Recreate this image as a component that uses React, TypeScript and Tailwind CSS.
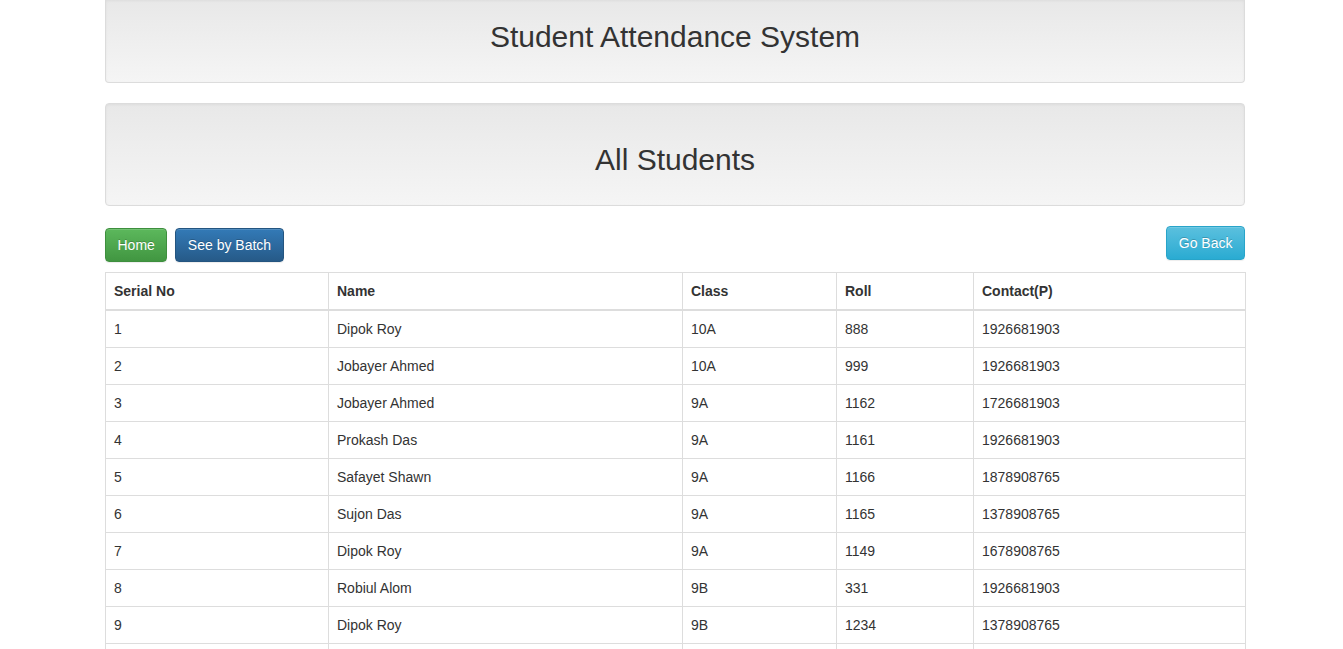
import React from "react";

const rows = [
  ["1", "Dipok Roy", "10A", "888", "1926681903"],
  ["2", "Jobayer Ahmed", "10A", "999", "1926681903"],
  ["3", "Jobayer Ahmed", "9A", "1162", "1726681903"],
  ["4", "Prokash Das", "9A", "1161", "1926681903"],
  ["5", "Safayet Shawn", "9A", "1166", "1878908765"],
  ["6", "Sujon Das", "9A", "1165", "1378908765"],
  ["7", "Dipok Roy", "9A", "1149", "1678908765"],
  ["8", "Robiul Alom", "9B", "331", "1926681903"],
  ["9", "Dipok Roy", "9B", "1234", "1378908765"],
  ["10", "Sujon Das", "9B", "1235", "1926681903"],
];

const wellCls =
  "bg-[linear-gradient(to_bottom,#e8e8e8_0%,#f5f5f5_100%)] border border-[#dcdcdc] shadow-[inset_0_1px_3px_rgba(0,0,0,0.05),0_1px_0_rgba(255,255,255,0.1)] px-[19px] text-center";

const btnBase =
  "px-[11.5px] py-[6px] text-[14px] leading-[20px] text-white rounded-[4px] border [text-shadow:0_-1px_0_rgba(0,0,0,0.2)] shadow-[inset_0_1px_0_rgba(255,255,255,0.15),0_1px_1px_rgba(0,0,0,0.075)]";

export default function App() {
  return (
    <div
      className="min-h-screen bg-white text-[#333] text-[14px] leading-[20px]"
      style={{ fontFamily: '"Liberation Sans", Arial, Helvetica, sans-serif' }}
    >
      <div className="w-[1140px] ml-[105px]">
        <div className={`${wellCls} border-t-0 rounded-b-[4px] pt-[20px] pb-[19px] mb-[20px]`}>
          <h2 className="text-[30px] leading-[33px] font-normal mt-0 mb-[10px]">
            Student Attendance System
          </h2>
        </div>
        <div className={`${wellCls} rounded-[4px] py-[19px] mb-[20px]`}>
          <h2 className="text-[30px] leading-[33px] font-normal mt-[20px] mb-[10px]">
            All Students
          </h2>
        </div>

        <div className="flex justify-between items-start">
          <div className="flex gap-[8px] mt-[2px]">
            <button
              className={`${btnBase} bg-[linear-gradient(to_bottom,#5cb85c_0%,#419641_100%)] border-[#3e8f3e]`}
            >
              Home
            </button>
            <button
              className={`${btnBase} bg-[linear-gradient(to_bottom,#337ab7_0%,#265a88_100%)] border-[#245580]`}
            >
              See by Batch
            </button>
          </div>
          <button
            className={`${btnBase} bg-[linear-gradient(to_bottom,#5bc0de_0%,#2aabd2_100%)] border-[#28a4c9]`}
          >
            Go Back
          </button>
        </div>

        <table className="mt-[10px] w-[1140px] border-collapse border border-[#ddd] table-fixed">
          <colgroup>
            <col className="w-[223px]" />
            <col className="w-[354px]" />
            <col className="w-[154px]" />
            <col className="w-[137px]" />
            <col className="w-[272px]" />
          </colgroup>
          <thead>
            <tr>
              {["Serial No", "Name", "Class", "Roll", "Contact(P)"].map((h) => (
                <th
                  key={h}
                  className="text-left font-bold p-[8px] leading-[20px] border border-[#ddd] border-b-2"
                >
                  {h}
                </th>
              ))}
            </tr>
          </thead>
          <tbody>
            {rows.map((r) => (
              <tr key={r[0]}>
                {r.map((c, i) => (
                  <td key={i} className="p-[8px] leading-[20px] border border-[#ddd]">
                    {c}
                  </td>
                ))}
              </tr>
            ))}
          </tbody>
        </table>
      </div>
    </div>
  );
}
